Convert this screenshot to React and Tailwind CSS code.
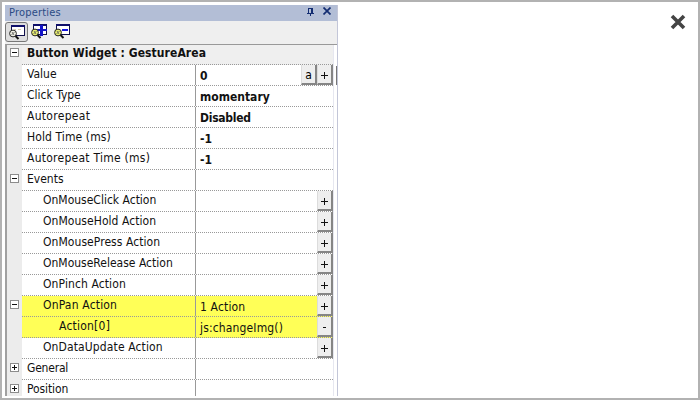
import React from "react";

const rows = [
  { label: "Button Widget : GestureArea", toggle: "-", header: true, track: "tracking-[0.08px]" },
  { label: "Value", value: "0", bold: true, buttons: ["a", "+"] },
  { label: "Click Type", value: "momentary", bold: true },
  { label: "Autorepeat", value: "Disabled", bold: true, track: "tracking-[0.3px]", valueTrack: "tracking-[-0.25px]" },
  { label: "Hold Time (ms)", value: "-1", bold: true, track: "tracking-[0.1px]" },
  { label: "Autorepeat Time (ms)", value: "-1", bold: true, track: "tracking-[0.26px]" },
  { label: "Events", toggle: "-" },
  { label: "OnMouseClick Action", level: 1, buttons: ["+"] },
  { label: "OnMouseHold Action", level: 1, buttons: ["+"], track: "tracking-[0.05px]" },
  { label: "OnMousePress Action", level: 1, buttons: ["+"], track: "tracking-[0.06px]" },
  { label: "OnMouseRelease Action", level: 1, buttons: ["+"] },
  { label: "OnPinch Action", level: 1, buttons: ["+"], track: "tracking-[0.1px]" },
  { label: "OnPan Action", level: 1, toggle: "-", value: "1 Action", buttons: ["+"], active: true, track: "tracking-[0.18px]", valueTrack: "tracking-[0.15px]" },
  { label: "Action[0]", level: 2, value: "js:changeImg()", buttons: ["-"], active: true, track: "tracking-[0.22px]", valueTrack: "tracking-[0.15px]" },
  { label: "OnDataUpdate Action", level: 1, buttons: ["+"], track: "tracking-[0.12px]" },
  { label: "General", toggle: "+", track: "tracking-[-0.2px]" },
  { label: "Position", toggle: "+", last: true, track: "tracking-[-0.1px]" },
];

const indents = ["pl-[5px]", "pl-[21px]", "pl-[37px]"];

function Toggle({ kind }) {
  return (
    <svg width="9" height="9" shapeRendering="crispEdges" className="block">
      <rect x="0.5" y="0.5" width="8" height="8" fill="#fff" stroke="#8c8c8c" />
      <path d="M2 4h5v1h-5z" fill="#111" />
      {kind === "+" && <path d="M4 2h1v5h-1z" fill="#111" />}
    </svg>
  );
}

function SmallButton({ children }) {
  return (
    <div className="flex h-[20px] w-[16px] items-center justify-center border-r-2 border-b-2 border-l border-r-[#858585] border-b-[#858585] border-l-[#dcdcdc] bg-[#eeeeee] text-[12px] leading-none text-black">
      {children === "a" ? (
        <span className="pt-[2px]">a</span>
      ) : (
        <svg width="9" height="9" shapeRendering="crispEdges" className="mt-[3px] block">
          {children === "+" ? (
            <path d="M1 4h7v1h-7zM4 1h1v7h-1z" fill="#111" />
          ) : (
            <path d="M3 4h3v1h-3z" fill="#111" />
          )}
        </svg>
      )}
    </div>
  );
}

function Dots() {
  return (
    <div className="h-px w-full shrink-0 bg-[repeating-linear-gradient(90deg,#999_0px,#999_1px,transparent_1px,transparent_2px)]" />
  );
}

function Row({ row }) {
  const height = row.header ? "h-[20px]" : row.last ? "h-[16px]" : "h-[21px]";
  const bg = row.header ? "bg-[#efefef]" : row.active ? "bg-[#ffff57]" : "bg-white";
  return (
    <div className={`flex shrink-0 ${height}`}>
      <div className={`flex w-[15px] shrink-0 items-start justify-center bg-[#ececec] ${row.header ? "pt-[3px]" : "pt-[4px]"}`}>
        {row.toggle && <Toggle kind={row.toggle} />}
      </div>
      <div className={`flex w-[311px] shrink-0 flex-col ${bg}`}>
        <div className="flex min-h-0 flex-1">
          <div
            className={`${row.header ? "w-full font-bold" : "w-[174px] border-r border-[#999] pt-[1px]"} ${indents[row.level || 0]} ${row.track || ""} leading-[17px] whitespace-nowrap`}
          >
            {row.label}
          </div>
          {!row.header && (
            <div className="flex flex-1 justify-between">
              <span className={`pl-[4px] pt-[3px] leading-[17px] whitespace-nowrap ${row.valueTrack || ""} ${row.bold ? "font-bold" : ""}`}>
                {row.value}
              </span>
              <div className="flex">
                {row.buttons && row.buttons.map((b) => <SmallButton key={b}>{b}</SmallButton>)}
              </div>
            </div>
          )}
        </div>
        {!row.last && <Dots />}
      </div>
      <div className="w-px shrink-0 bg-[#e6e7f0]" />
      {row.label === "Value" && <div className="ml-[2px] mt-[1px] h-[19px] w-px bg-[#777]" />}
    </div>
  );
}

function ToolIcon({ kind }) {
  return (
    <svg width="17" height="15" viewBox="0 0 17 15" shapeRendering="crispEdges" className="block">
      <rect x="2.5" y="0.5" width="13" height="10" fill="#fff" stroke="#10104a" />
      <path d="M2 0h14v2H2z" fill="#10106a" />
      {kind === "plus" && <path d="M9 1h3v4h4v2h-4v5h-3V7H6V5h3z" fill="#1414c8" />}
      {kind === "minus" && <path d="M8 5h6v2H8z" fill="#1414e0" />}
      {kind === "window" && <path d="M5 4h2v1H5zM9 4h3v1h-3z" fill="#d8cda8" />}
      <g shapeRendering="auto">
        <circle cx="4" cy="8.5" r="3.4" fill={kind === "window" ? "#f0f0e4" : "#e8ee70"} stroke="#222" strokeWidth="1" />
        <path d="M2.5 10l3-3M3 7l2 3" stroke="#555" strokeWidth="0.8" />
        <path d="M6.5 11l3 3" stroke="#111" strokeWidth="2" />
      </g>
    </svg>
  );
}

export default function App() {
  return (
    <div className="flex h-[400px] w-[700px] items-start overflow-hidden border-2 border-[#b2b2b2] bg-white pl-[3px] pt-[3px] font-['DejaVu_Sans_Condensed','DejaVu_Sans',sans-serif] text-[12px] text-[#111]">
      <div className="flex h-[391px] w-[333px] flex-col border-r border-[#c3c6d8] bg-white">
        <div className="flex h-[16px] shrink-0 items-center justify-between bg-[#b3bed6] pl-[4px] pr-[6px] text-[11px] leading-none text-[#2b4b85]">
          <span className="pb-[2px] tracking-[0.2px]">Properties</span>
          <div className="flex items-center gap-[8px] pb-[4px]">
            <svg width="9" height="9" shapeRendering="crispEdges" className="block">
              <path d="M2 1h5v5h1v1h-3v2h-1v-2h-3v-1h1zM3 2v4h2V2z" fill="#132d72" fillRule="evenodd" />
            </svg>
            <svg width="8" height="8" className="block">
              <path d="M0.5 0.5l7 7M7.5 0.5l-7 7" stroke="#132d72" strokeWidth="1.7" />
            </svg>
          </div>
        </div>
        <div className="flex h-[23px] shrink-0 bg-[#efefef] pt-[1px]">
          <div className="flex h-[20px] w-[23px] items-start rounded-[3px] border border-[#777] bg-[#dedede] pl-[3px] pt-[2px]">
            <ToolIcon kind="window" />
          </div>
          <div className="pl-[3px] pt-[2px]">
            <ToolIcon kind="plus" />
          </div>
          <div className="pl-[6px] pt-[2px]">
            <ToolIcon kind="minus" />
          </div>
        </div>
        <div className="flex w-[332px] flex-1 flex-col border-t border-l-2 border-l-[#a0a0a0] border-t-[#999]">
          {rows.map((row) => (
            <Row key={row.label} row={row} />
          ))}
        </div>
      </div>
      <svg width="16" height="16" className="mt-[9px] ml-[332px] block">
        <path d="M2 2l12 12M14 2L2 14" stroke="#444" strokeWidth="3.6" />
      </svg>
    </div>
  );
}
